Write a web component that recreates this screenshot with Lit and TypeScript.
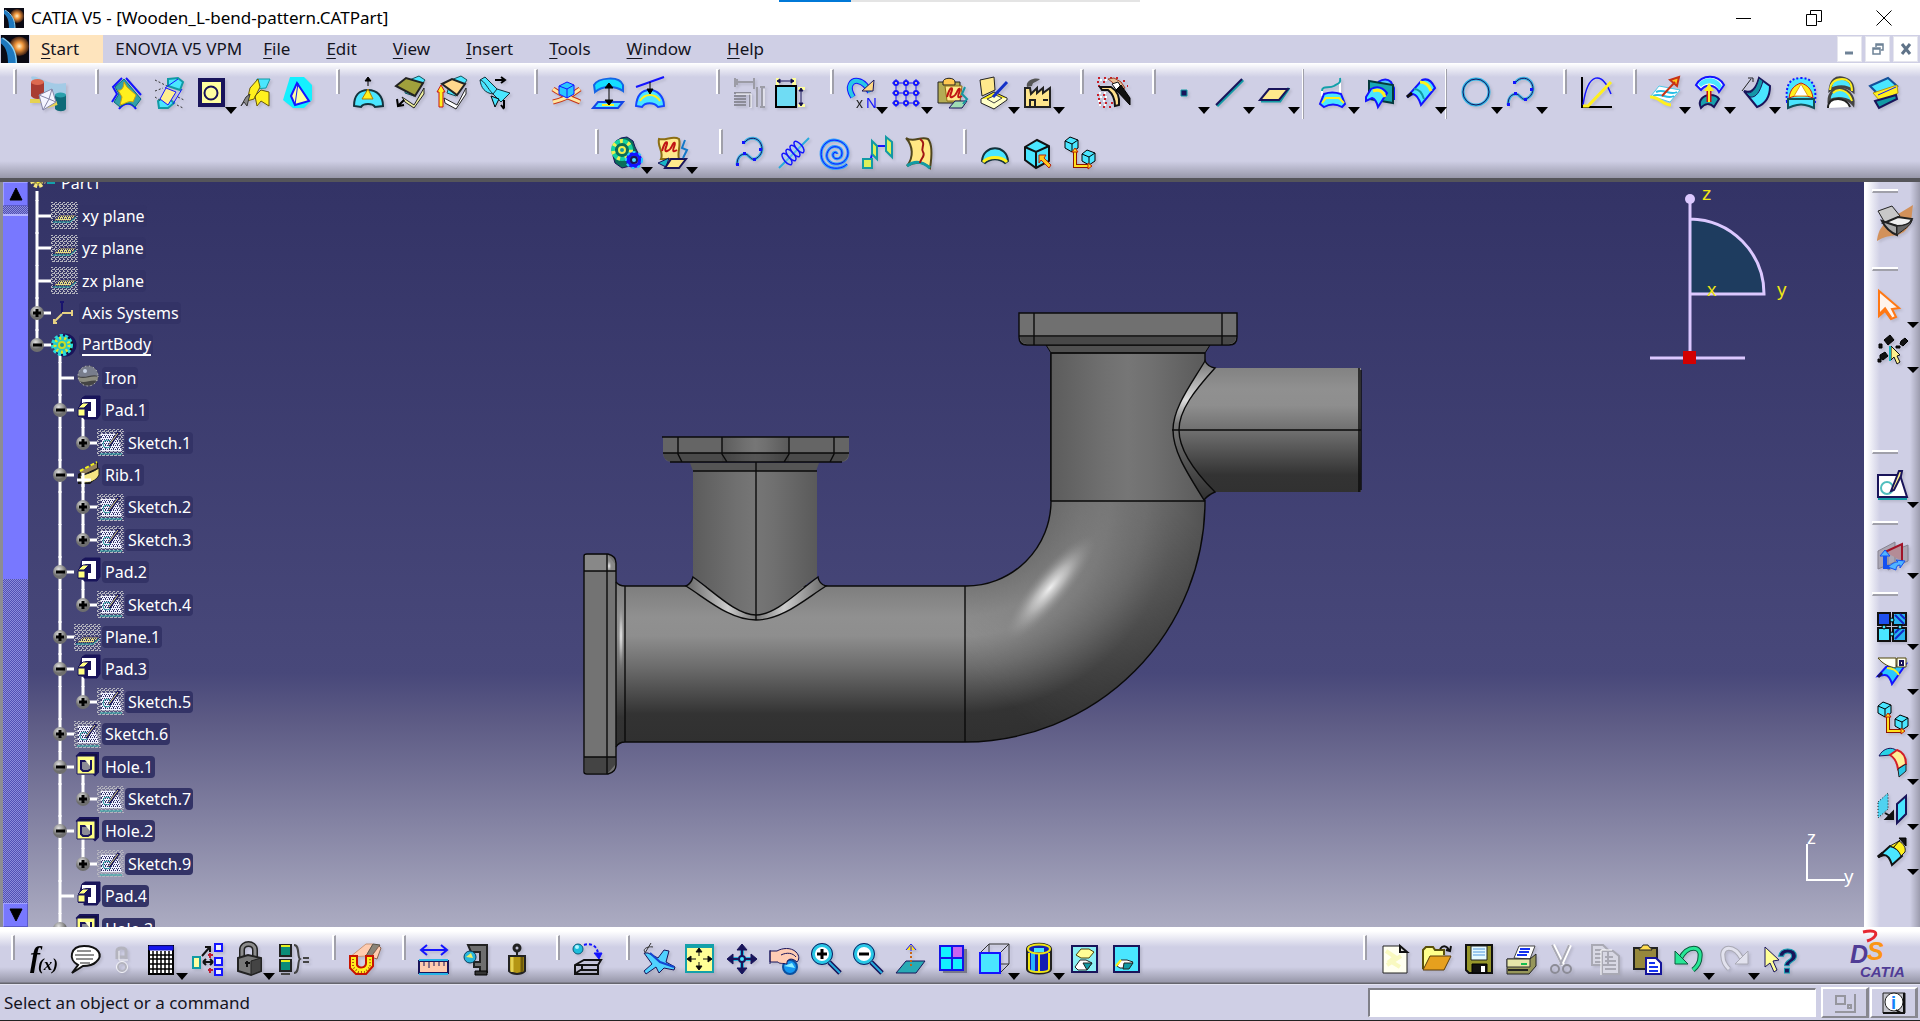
import { LitElement, html, css, svg, nothing } from "lit";
import { customElement } from "lit/decorators.js";

const CY = "#4ae6ff";
const BL = "#1414ff";
const NV = "#19145a";
const YE = "#fff01e";
const TN = "#ffe98c";
const TE = "#129aa4";
const GR = "#a9a9b4";

const p = (d: string, fill = "none", stroke = "#000", w = 1) =>
  svg`<path d=${d} fill=${fill} stroke=${stroke} stroke-width=${w} />`;
const c = (x: number, y: number, r: number, fill = "none", stroke = "#000", w = 1) =>
  svg`<circle cx=${x} cy=${y} r=${r} fill=${fill} stroke=${stroke} stroke-width=${w} />`;
const ICUBE = (x: number, y: number, f = CY) =>
  svg`${p(`M${x} ${y + 4}l5-4 8 3v8l-6 4-7-4z`, f)}${p(`M${x} ${y + 4}l7 3 6-4M${x + 7} ${y + 7}v8`)}`;
const LINKS = svg`${ICUBE(1, 0)}${ICUBE(18, 13)}${p("M11 14v15h14", "none", "#8c1400", 4)}${p("M11 13v16h14", "none", "#ffe01e", 2)}${p("M8 15l3-4 3 4zM24 26l4 3-4 3z", "#ffe01e", "#c02000")}`;
const CURVE = svg`${p("M8 6C13-1 22 0 25 7s-1 13-6 15-6-6-11-5-7 5-7 11", "none", "#3cb4e6", 3)}${p("M8 6C13-1 22 0 25 7s-1 13-6 15-6-6-11-5-7 5-7 11", "none", NV, 1)}${p("M6 4h3v3H6zM23 11h3v3h-3zM17 21h3v3h-3zM7 15h3v3H7zM0 26h3v3H0z", BL, BL, 0)}`;
const SQUIG = p("M5 14C8 3 12 3 9 10s4 4 6-1 4-4 2 1 0 5 3 3", "none", "#c01414", 2);

const ICONS: Record<string, unknown> = {
  mail: svg`${p("M1 0c8-3 15 10 35 6v18H10z", "#a4cbe6", "none")}${p("M1 5v14c3 4 10 4 13 0V5z", "#a83c32", "none")}<ellipse cx="7.500" cy="5" rx="6.500" ry="3" fill="#dd6a50" />${p("M25 18v14c3 3 9 3 11 0V18z", "#0e6a78", "none")}<ellipse cx="30.500" cy="18" rx="5.500" ry="2.500" fill="#2aa0ac" />${p("M0 24h12l5 5 10-3", "none", "#e6d250", 4)}${p("M9 18l13-6 4 13-13 8z", "#f4f4ff", "#8686a8")}${p("M9 18l10 4 3-10M13 33l6-11 7 3", "none", "#8686a8")}`,
  join: svg`${p("M10 1L1 10l4 7-5 8M14 1l15 17M7 32c5-7 13-7 17 0", "none", BL, 2)}${p("M12 2L3 10l4 7-5 8 6 5c5-5 11-5 15 0l6-8z", "#32a0aa", "#0a6e78")}${p("M12 5l3 5 9 8-3 7c-4-2-8 2-13 3l2-8-4-7c4 1 6-3 6-8z", YE, "#c8a014")}`,
  heal: svg`${p("M14 2l10-1 5 4-3 8-12-4z", CY, TE, 2)}${p("M4 24l8-5 8 7-6 5H5z", CY, TE, 2)}${p("M12 11l10 4-8 13-8-6z", "#ffee90", BL)}<path d="M1 3l12 6M1 14l8-3M24 20l6 3M23 28l6 3M1 20l6 4" fill="none" stroke="#333" stroke-dasharray="2 2" />${p("M11 11L24 2M19 27l9-15", "none", BL)}`,
  untrim: svg`${p("M4 3h23v25H4z", "#ffffa0", NV, 4)}${c(15, 16, 6.5, "none", NV, 2)}`,
  disassemble: svg`${p("M16 2h13l-4 9-12 1z", CY, TE)}${p("M9 11l8-9 2 8-6 12-7 2zM14 19l6-6 8 2v14l-8-5-4 5z", YE, "#69570a")}${p("M0 29l5-9 4-3-3 12-3-4z", "#888", "#333")}`,
  split: svg`${p("M7 0h14l8 8v15l-8 8H10L0 23z", "#14f0ff", "none")}${p("M14 6l12 18-14 4-4-9z", "#ffffa0", BL, 2)}${p("M15 6l-3 22", "none", BL, 1)}`,
  extrude1: svg`${p("M15 9V2M12 4l3-4 3 4z", "#000")}${p("M1 29c0-10 5-16 14-16s15 6 15 16l-8 1c-2-4-12-4-14 0z", CY, "#14323c", 2)}${p("M15 12l5 10H9z", YE, "#b07c00")}`,
  offset1: svg`${p("M12 4l12-5 6 4-11 16-9-3z", CY, "#14505a")}${p("M1 9l10-8 17 5-8 13z", "#a0a03c", "#222", 2)}${p("M7 20l12 8 10-17v6L19 31l-9-6z", "#f0f0a0", "#222")}${p("M3 29l6-6M2 22l1 7 6-1", "none", "#000", 2)}`,
  offset2: svg`${p("M14 3l10-4 6 4-11 16-9-3z", CY, "#14505a")}${p("M5 7l10-5 13 5-8 11z", "#ffd88c", "#222", 2)}${p("M7 21l13 7 9-17v6L19 32l-11-6z", "#fff", "#222")}${p("M2 30V15H0l4-7 4 7H6v15z", YE, "#c81414")}`,
  rotate: svg`${p("M1 3l5-3 12 12 13 4-9 9-8-8C6 16 2 11 1 3z", CY, "#14323c")}${p("M1 3c5 1 7 8 13 14M18 12l-4 5", "none", "#14323c")}${p("M16 3h9M22 0l4 3-4 3M25 23v8M22 28l3 4", "none", "#000", 2)}${p("M12 19l4 11 4-8z", CY)}`,
  csys: svg`${p("M2 25c9-2 18-6 27-13M29 25C20 21 10 18 2 12", "none", "#c83214", 5)}${p("M2 25c9-2 18-6 27-13M29 25C20 21 10 18 2 12", "none", "#ffe6a0", 3)}${p("M8 9l8-4 7 3v9l-7 4-8-4z", "#28c8ff", BL)}${p("M8 9l8 3 7-4M16 12v9", "none", BL)}`,
  thick: svg`${p("M1 8C5 1 26-2 30 8v6c-7-5-20-6-28 1z", "#14dcff", "#1464e6", 2)}${p("M5 25h25l-5 6H0z", CY, "#1446e6", 2)}${p("M9 28h12", "none", YE, 2)}${p("M16 8v18M12 11l4-5 4 5zM12 23l4 5 4-5z", "#000", "#000", 1)}`,
  draft: svg`${p("M1 10L29 0", "none", BL, 2)}${p("M1 29c1-12 7-16 14-16s14 6 14 16l-6 1c-4-5-13-5-16 0z", CY, "#1446ff", 2)}${p("M5 24c5-8 15-8 20 0", "none", YE, 2)}${p("M15 5v10M12 12l3 5 3-5z", "#000")}`,
  dimOff: svg`${p("M2 1v9M21 1v11M2 5h18M4 2v6M27 10h5M27 30h5M29 11v19M24 10v20", "none", "#9c9ca6", 2)}${p("M1 16h16v14M1 19h12M1 22h12M1 25h12M1 28h12", "none", "#8c8c98", 2)}${p("M3 17h15v14M31 12v17", "none", "#fff", 1)}`,
  dim: svg`${p("M1 1h3v8H1zM17 1h4v8h-4zM23 10h7v3h-7zM23 27h7v3h-7z", "#ffff9c", "none")}${p("M1 9h20v21H1z", "#6fdcf4", "#000", 2)}${p("M2 4h17M2 4l3-2v4zM19 4l-3-2v4zM26 12v16M26 11l-2 3h4zM26 29l-2-3h4z", "#000", NV, 1)}`,
  repeat: svg`${p("M6 20C-1 9 5 3 11 4s9 6 12 11", "none", BL, 6)}${p("M6 20C-1 9 5 3 11 4s9 6 12 11", "none", "#28c8e6", 4)}${p("M15 14h11l1-11z", "#ffd884", NV)}<text x="9" y="31" font-size="14" fill="#222">x</text><text x="19" y="31" font-size="15" fill="#1414ff">N</text>`,
  pattern: svg`${p("M4 2v28M14 2v28M24 2v28M0 6h28M0 16h28M0 26h28", "none", BL, 1)}${[4, 14, 24].map((x) => [6, 16, 26].map((y) => c(x, y, 2, "#ffff9c", BL, 2)))}`,
  paste1: svg`${p("M1 5h22v21H1z", "#b4ac54", "#222", 1)}${p("M6 5c0-5 12-5 12 0v3H6z", "#ffc850", "#222")}${p("M8 9h17l-2 15H10z", "#ffe98c", "#8c6e14")}<g transform="translate(5 6)">${SQUIG}</g>${p("M12 31l6-7h12l-5 7z", "#a0dcb4", NV)}${p("M28 10l-3 7 5 5-4 5", "none", "#1496a0", 2)}`,
  catalog: svg`${p("M1 3L15 0l1 13-13 6z", TN, "#222", 1)}${p("M2 22l13-7 13 6-13 10z", YE, "#222", 1)}${p("M2 22v4l13 6 13-9v-2", "#ffffc8", "#222")}${p("M8 22l9-4 6 3-8 5z", "#ffffc8", "#444")}${p("M14 20l14-15", "none", "#1432c8", 3)}`,
  factory: svg`${p("M1 30V11h5l1 6 6-6v5l6-5v5l7-5v19z", "#ffe68c", "#222", 2)}${p("M6 30v-7h5v7M19 23h5", "none", "#222", 2)}${p("M3 10c-2-7 8-10 13-8-4 4-7 2-8 7z", "#555", "none")}`,
  wizard: svg`<path d="M1 1h20M0 5h9M1 9h5M0 18h12M1 22h12M2 26h14M20 4h9M24 9h7M6 30h10" fill="none" stroke="#c81e28" stroke-width="2" stroke-dasharray="2 4" /><path d="M3 3h8M2 16h10M3 20h8M1 24h10M2 28h8" fill="none" stroke="#fff" stroke-width="2" stroke-dasharray="2 3" />${p("M11 2l6-1 7 4 4 6-4 2-9-8z", "#e6be96", "#a03c28", 1)}${p("M3 10h11c5 3 9 9 8 18l-4 1c0-8-2-12-7-16H5z", "#ffe08c", "#111", 2)}${p("M15 7l6-2 3 5-4 4z", "#fff", "#111")}${p("M19 13l5-5 9 13v7z", "#111", "#000")}`,
  point: p("M12 13h6v6h-6z", NV, TE, 1),
  line: svg`${p("M3 29L29 3", "none", TE, 3)}${p("M2 28L28 2", "none", NV, 2)}`,
  plane: svg`${p("M2 24h19l9-13", "none", TE, 3)}${p("M10 12h19l-9 11H1z", TN, NV, 2)}`,
  project: svg`${p("M3 13v6M21 1v17", "none", "#fff", 2)}${p("M3 14c0-6 7-2 12-5s7-3 6-8", "none", "#14a0aa", 2)}${p("M5 17q8-3 17 0l4 10-3 3q-9-5-18 0l-4-3z", CY, BL, 2)}${p("M3 26l4-5h13l5 5", "none", YE, 2)}`,
  intersect: svg`${p("M14 5q8-5 13 0l3 6v12", "#50c8ff", BL, 2)}${p("M5 4l24 4v18l-24-4z", "#18a8b4", "#04383c", 2)}${p("M2 20l5-8q9-5 16 4l-9 14q-2-8-6-9l-6 3z", CY, BL, 2)}${p("M9 14q9-3 12 6", "none", YE, 3)}`,
  parallel: svg`${p("M1 20L16 3q8-3 13 8L15 28q-3-10-8-11z", CY, BL, 2)}${p("M1 20l5-4", "none", "#111", 3)}${p("M14 5q8 0 11 9", "none", YE, 3)}${p("M8 12q7 0 10 10", "none", TE, 2)}`,
  circle: svg`${c(14, 15, 13, "none", "#28b4e6", 3)}${c(14, 15, 13, "none", NV, 1)}`,
  spline: CURVE,
  law: svg`${p("M2 0v30h30", "none", "#000", 2)}${p("M3 28C8-6 22-6 31 17", "none", BL, 1.5)}${p("M3 29h5L31 5", "none", YE, 3)}`,
  extrude: svg`${p("M1 19L9 9l21 4-10 12z", "#fff", "#50c8e6")}${p("M3 19c8-4 14 4 21 0M6 15c8-4 14 4 21 0", "none", "#28bee6", 2)}${p("M0 20c8-1 13 8 21 8", "none", YE, 3)}${p("M12 19L25 5M20 3l9-3-2 9z", "#ffc81e", "#c83214", 2)}`,
  revolve: svg`${p("M1 8C7-3 23-3 29 8l-5 7C20 7 10 7 6 13z", "#fff", BL, 2)}${p("M3 7C9-1 22-1 27 9l-3 4C20 5 11 5 6 10z", CY, "none")}${p("M6 31c-4-8 3-13 9-13 5 0 8 2 9 4l-5 8c-4-4-9-4-13 1z", "#18a0ac", NV, 2)}${p("M14 25V11", "none", "#c81414", 5)}${p("M14 25V11M11 13l3-5 3 5z", YE, YE, 2)}`,
  sweep: svg`${p("M4 14c7 3 12-2 15-13l11 8c0 12-5 18-13 21z", CY, NV, 2)}${p("M5 15c6 3 11-2 14-14l4 3C20 15 16 21 10 20z", "#1496a8", NV)}${p("M2 14l9-12M8 1h5v4", "none", "#222")}`,
  fill: svg`<path d="M2 25C0 6 6 1 16 1s16 6 14 24z" fill="#4ae6ff" stroke="#1414ff" stroke-width="2" stroke-dasharray="2 2" />${p("M4 21c1-9 6-13 12-15 6 2 11 6 12 15-7-3-17-3-24 0z", YE, "#c81414", 1)}${p("M9 19l7-12 7 12z", "#fff", "#e6a014")}${p("M3 22h26v9l-5-2c-5-2-11-2-16 0l-5 2z", CY, "#14505a", 2)}`,
  multisec: svg`${p("M3 13C4 3 9 0 15 1s11 4 11 13c-7-6-17-5-23-1z", CY, "#444", 3)}${p("M3 13C4 4 9 2 15 2s10 4 10 12", "none", YE, 2)}${p("M2 24c0-9 6-13 12-12s13 6 12 15c-5-6-17-7-24-3z", CY, "#444", 3)}${p("M6 16c5-5 15-4 19 8", "none", YE, 2)}${p("M1 31c0-8 6-9 10-9s10 2 12 8", "#fff", "#222", 2)}`,
  blend: svg`${p("M1 9L19 1l9 8-19 8z", CY, "#14509a", 2)}${p("M4 16l24-8 1 8-18 8z", YE, "#b49614")}${p("M9 18l18-8", "none", BL)}${p("M6 24l21-6 1 4-18 9z", TE, NV, 2)}`,

  gears: svg`${p("M4 4l5-3 6-1 6 4 2 6 3 6-2 8-6 5-8 2-7-5-2-7 2-7z", "#0a6e5a", NV, 1)}${c(10, 13, 9, "none", "#14d2a0", 4)}<circle cx="10" cy="13" r="9" fill="none" stroke="#f0f050" stroke-width="4" stroke-dasharray="3 5" />${c(10, 13, 3, TE, "#f0f050", 2)}${c(22, 23, 6, "none", BL, 4)}${c(22, 23, 3, CY, NV, 2)}<circle cx="22" cy="23" r="8" fill="none" stroke="#28c8ff" stroke-width="2" stroke-dasharray="3 3" />`,
  feature: svg`${p("M2 2c7 2 14-4 20 0 2 7-2 13 0 20H4C7 15 0 9 2 2z", TN, "#8c6e14", 2)}${SQUIG}${p("M1 26l11-5-3 9z", "#18b4c8", NV)}${p("M8 31l6-9h15l-7 9z", TN, NV, 2)}${p("M28 3l-3 8 5 2-4 8", "none", "#1478c8", 2)}`,
  helix: svg`${p("M1 31L31 1", "none", "#28aadc", 2)}${[0, 1, 2, 3].map((i) => svg`<ellipse cx=${9 + i * 4} cy=${22 - i * 4} rx="3" ry="7" transform=${`rotate(-40 ${9 + i * 4} ${22 - i * 4})`} fill="#a0dcff" fill-opacity=".4" stroke=${BL} stroke-width="1.5" />`)}`,
  spiral: svg`${p("M17 17c0-3-5-2-4 2s9 4 9-3-10-9-14-2 2 14 10 13 12-9 9-16S13 0 6 6 0 23 6 28s17 4 21-1", "none", "#28a0ff", 3)}${p("M17 17c0-3-5-2-4 2s9 4 9-3-10-9-14-2 2 14 10 13 12-9 9-16S13 0 6 6 0 23 6 28s17 4 21-1", "none", BL, 1)}`,
  spine: svg`${p("M6 25C14 18 6 11 15 9h15", "none", BL, 2)}${p("M1 22h9v9H1zM10 4l5 5v13l-5-5zM24 0l6 5v15l-6-6z", "#dcf05a", TE, 2)}`,
  boundary: svg`${p("M2 1c8 5 14-2 22 1 5 6 4 17 2 29-6-6-14-7-23-2 7-9 6-20-1-28z", "#ffe884", "#50461e", 2)}${p("M3 29c8-6 16-4 23 2", "none", TE, 3)}${p("M16 2c7 5 0 9 3 13s-3 7-3 11", "none", "#a01414", 2)}`,
  dome: svg`${p("M2 24C3 7 27 7 28 24l-3 2c-6-5-14-5-20 0z", CY, "#14323c", 2)}${p("M3 25c6-6 18-6 24 0", "none", YE, 3)}`,
  cube: svg`${p("M3 10L15 3l12 6v15l-13 7-11-8z", CY, "#111", 2)}${p("M3 10l11 5 13-6M14 15v16", "none", "#111", 2)}${p("M17 18h7l-2 3 7 7-2 3-8-8-2 3z", "#ffc81e", "#b42814")}`,
  links: LINKS,

  fx: svg`<text class="it" x="2" y="24" font-size="30" font-weight="700">f</text><text class="it" x="10" y="27" font-size="17" font-weight="700">(x)</text>`,
  comment: svg`${p("M2 30l6-8C-2 17 0 3 14 3s20 9 12 16c-3 3-8 4-13 4z", "#fff", "#111", 2)}${p("M7 8h14M5 12h19M6 16h17M10 20h10", "none", "#222", 1)}`,
  chain: svg`${p("M5 16V8c0-4 9-4 9 0v8M5 14h9", "none", "#b4b4be", 3)}${c(10, 24, 4, "none", "#b4b4be", 2)}${c(10, 24, 5.5, "none", "#f4f4f8", 1)}${p("M7 8v9h9", "none", "#f4f4f8")}`,
  table: svg`${p("M2 3h24v28H2z", "#fff", "#000", 2)}${p("M2 3h24v4H2z", "#1414f0", "#1414c8")}${p("M6 8v23M10 8v23M14 8v23M18 8v23M22 8v23M2 12h24M2 16h24M2 21h24M2 26h24", "none", "#000", 1.5)}`,
  relations: svg`${p("M1 14h7v11H1z", "#ffffa0", TE, 2)}${p("M23 1h7v7h-7zM23 15h7v7h-7zM23 26h7v6h-7z", "#eef", BL, 2)}${p("M11 19h10M11 19l3-3M11 19l3 3M21 19l-3-3M21 19l-3 3M10 13l7-8M13 4h5v5", "none", "#111", 2)}${p("M16 12h5M18 10v5M16 27h5M18 25v5", "none", "#c01e32", 2)}`,
  lock: svg`${p("M8 15V7c0-8 13-8 13 0v9", "none", "#222", 6)}${p("M8 15V7c0-8 13-8 13 0v9", "none", "#8c8c8c", 3)}${p("M4 15l10-3 13 3v13l-10 4-13-4z", "#787878", "#222", 2)}${p("M17 18v14l10-4V15z", "#444", "#222")}${p("M11 20h5M13 18v6", "none", "#111", 2)}`,
  params: svg`${p("M1 2h11v11H1zM1 17h11v11H1z", "#0a8c78", "#222", 2)}${p("M2 3h9M2 18h9", "none", "#e6f01e", 2)}${p("M15 2c6 0 3 12 6 14-3 2 0 14-6 14", "none", "#444", 2)}${p("M24 15h6M24 19h6M2 31h9", "none", "#444", 2)}`,
  pipe: svg`${p("M1 14L17 1h7l-7 12z", "#ffccb0", "#c89678")}${p("M17 13l4 2L31 2l-7-1z", "#8a8478", "#5a5448")}${p("M22 14l8-11 2 2-4 11z", "#ffccb0", "#8c6450")}${p("M1 13h7v9c2 4 9 3 9-2v-7h7v10l-7 8H7l-6-6z", YE, "#c81400", 2)}<path d="M4 16v8l5 5h7l5-5v-8" fill="none" stroke="#b45014" stroke-width="2" stroke-dasharray="1 2" />`,
  measure: svg`${p("M2 7h26M8 2L2 7l6 5M22 2l6 5-6 5", "none", BL, 2)}${p("M0 18h29v12H0z", "#ffccb0", NV, 2)}${p("M5 18v5M10 18v7M15 18v5M20 18v5M25 18v5", "none", NV, 1)}${p("M0 17h29M0 31h29", "none", "#28b4e6", 2)}`,
  clamp: svg`${p("M7 2h19v27h-7v-5h-6v-5h6V9h-9z", "#6e6e6e", "#222", 2)}${c(9, 14, 6, "#28b4dc", "#0a3c5a", 1)}${p("M5 14l5-4 2 5z", "#f0f064", "none")}${p("M14 28h12v4H14z", "#333")}`,
  weight: svg`${c(14, 5, 3, "none", "#222", 3)}${p("M14 8v4M6 13h16v15c-4 4-12 4-16 0z", "#b49614", "#222", 2)}${p("M9 14v15", "none", "#e6d250", 3)}${p("M19 14v15", "none", "#6e5a0a", 3)}`,
  update: svg`${c(5, 6, 5, "#1cbedc", "#0a5a78")}${c(4, 4, 2, "#b4f5ff", "none")}<path d="M11 2c6-2 14 0 14 10" fill="none" stroke="#1414ff" stroke-width="2" stroke-dasharray="3 2" />${p("M21 10h8l-3 6z", BL, BL)}${p("M2 22l9-5h17l-3 5v9H2zM2 22h23M9 22v5h16M9 26l-6 4", "none", "#111", 2)}`,
  fly: svg`${p("M1 28l8-7L1 10h4l10 5 6-8 5 1-3 11 9 5-1 3-10-2-5 5-3-6-10 7z", "#50d2ff", NV, 1)}${p("M7 10l10 9 14 5", "none", "#1446d2", 2)}${p("M2 9C-1 6 5 3 10 4M8 0l-6 10", "none", "#333", 1)}`,
  fit: svg`${p("M1 2h27v27H1z", "#ffff96", "#14a0aa", 2)}${p("M0 3h29", "none", "#14a0aa", 4)}${p("M14 13V6M14 19v7M4 16h7M18 16h7M11 9l3-4 3 4zM11 23l3 4 3-4zM6 13l-4 3 4 3zM23 13l4 3-4 3z", "#000", "#111", 1)}`,
  pan: svg`${p("M15 3v27M2 16h26", "none", "#28b4dc", 4)}${p("M15 3v27M2 16h26", "none", NV, 2)}${p("M10 7l5-6 5 6zM10 25l5 6 5-6zM6 11l-6 5 6 5zM24 11l6 5-6 5z", NV, NV)}${c(15, 16, 3, CY, NV, 2)}`,
  orbit: svg`${c(21, 24, 7, "#1496f0", "#0a50a0", 2)}${p("M15 23l8-3 3 5z", "#8cf0ff", "none")}${p("M1 8h7c5-3 14-4 19 1 4 4 3 8 1 10-5-5-11-3-10 2-4-1-8 0-9-2H1z", "#ffccb4", NV, 1)}${p("M12 12c6-3 12-2 15 2M1 7v14", "none", NV, 1)}`,
  zoomIn: svg`${p("M18 19l11 11", "none", NV, 5)}${p("M17 18l12 12", "none", "#28aadc", 2)}${c(11, 11, 9, "#fff", "#28c8e6", 4)}${c(11, 11, 10.5, "none", NV, 1)}${p("M6 11h10M11 6v10", "none", "#000", 3)}`,
  zoomOut: svg`${p("M18 19l11 11", "none", NV, 5)}${p("M17 18l12 12", "none", "#28aadc", 2)}${c(11, 11, 9, "#fff", "#28c8e6", 4)}${c(11, 11, 10.5, "none", NV, 1)}${p("M6 11h10", "none", "#000", 3)}`,
  normal: svg`${p("M1 30l10-12h19L21 30z", "#28aab4", NV, 1)}<path d="M16 23V5" fill="none" stroke="#c86414" stroke-width="2" stroke-dasharray="2 2" />${p("M11 7l5-6 5 6M16 3v5", "#ffe01e", BL, 1)}`,
  views: svg`${p("M6 6h24v24H6z", "#78788a", "none")}${p("M3 3h23v24H3z", "#14f0ff", "#1414e6", 2)}${p("M15 4h10v10H15z", "#c864f0", "none")}${p("M15 3v24M3 15h23", "none", "#1414e6", 2)}`,
  box: svg`${p("M1 10L10 1h20v20l-9 9M21 10l9-9M10 1v9M21 21h9", "none", "#333", 1)}${p("M1 10h20v20H1z", CY, BL, 2)}`,
  cylinder: svg`${p("M3 6c0-7 24-7 24 0v20c0 6-24 6-24 0z", "#141eb4", "#222", 2)}${p("M7 10h4v18H7z", "#28b4ff", "none")}${p("M4 6c0-6 22-6 22 0s-22 6-22 0zM5 10v16c0 4 20 4 20 0V10M15 10v18", "none", "#f0e614", 2)}${p("M10 5h10v4H10z", CY, "none")}`,
  hide: svg`${p("M3 3h25v26H3z", "#8cf0f5", NV, 2)}${p("M7 12l5-6h8l5 3-5 6h-8z", "#ffff96", "#50460a")}${p("M6 24l5-7h6l6 3-5 7h-9z", "#fff", "#222")}${p("M14 20l9 0-5 7z", TE, "#222")}`,
  swap: svg`${p("M3 3h25v26H3z", CY, NV, 2)}${p("M6 23l4-6h6l6 2-4 6h-9z", "#fff", "#222")}${p("M13 20h9l-4 6h-6z", TE, "#222")}${p("M5 23l5-6", "none", YE, 2)}`,
  newDoc: svg`${p("M3 3h17l7 6v21H3z", "#fffff0", "#222", 1)}${p("M20 3v6h7z", "#ddd", "#111", 2)}${p("M6 8l9 6-5 4 10 6M7 22l14-9", "none", "#f9f9c0", 4)}`,
  open: svg`${p("M1 26V7l3-3h7l2 3h9v5", "#ffff8c", "#5a500a", 2)}${p("M1 27l7-14h21l-7 14z", "#e6a01e", "#5a3c0a", 1)}${p("M18 6c4-5 8-2 9 2M24 7l4 1 1-5", "none", "#111", 2)}`,
  save: svg`${p("M2 2h26v28H5l-3-3z", "#96962a", "#111", 2)}${p("M7 3h16v14H7z", "#e6faff", "#222", 1)}${p("M9 6h12M9 9h12M9 12h12", "none", "#5096dc")}${p("M8 21h15v9H8z", "#111")}${p("M17 23h4v6h-4z", "#fff", "none")}`,
  print: svg`${p("M8 15l5-12h16l-5 13z", "#fff", "#444")}${p("M14 6h10M13 9h10M11 12h10", "none", "#1432f0", 2)}${p("M1 16h23l6-5v12l-7 8H1z", "#96965a", "#222", 1)}${p("M1 16h23v8H1z", "#e6e6aa", "#333")}${p("M15 21h6", "none", "#14be50", 2)}${p("M2 27h20", "none", "#222", 2)}`,
  cut: svg`${p("M5 2l10 20M22 2L13 22", "none", "#fff", 4)}${p("M4 2l10 20M21 2L12 22", "none", GR, 2)}${c(7, 26, 4, "none", "#8c8c96", 2)}${c(19, 26, 4, "none", "#8c8c96", 2)}`,
  copy: svg`${p("M2 2h11l5 5v15H2zM12 8h11l6 5v18H12z", "#d8d8e4", GR, 2)}${p("M5 7h7M5 11h6M5 15h6M5 19h6M15 14h8M15 18h11M15 22h11M15 26h11", "none", GR, 2)}${p("M11 32V7h11", "none", "#fff")}`,
  paste: svg`${p("M2 5h23v21H2z", "#96883c", "#222", 2)}${p("M7 7c0-2 3-2 4-5h5c1 3 4 3 4 5z", "#ffdc50", "#222")}${p("M14 15h10l5 5v11H14z", "#fff", "#14149a", 2)}${p("M17 20h6M17 24h9M17 28h9", "none", "#1432f0", 2)}`,
  undo: svg`${p("M6 16C14 1 28 3 26 14c0 5-2 9-7 13", "none", "#0a5a3c", 5)}${p("M6 16C14 1 28 3 26 14c0 5-2 9-7 13", "none", "#28e696", 3)}${p("M1 8v13h13z", "#28e696", "#0a5a3c", 1)}`,
  redo: svg`${p("M23 16C15 1 2 3 4 14c0 5 2 8 6 12", "none", GR, 5)}${p("M23 16C15 1 2 3 4 14c0 5 2 8 6 12", "none", "#e2e2ee", 3)}${p("M29 8v13H16z", "#e2e2ee", GR, 1)}`,
  help: svg`${p("M1 4l14 13-6 1 4 9-3 2-4-9-5 4z", "#ffff96", NV, 1)}<text x="13" y="30" font-size="35" font-weight="700" fill="#19145a" stroke="#18a0b4" stroke-width="1">?</text>`,

  workbench: svg`${p("M0 34c2-12 5-12 8-18L36-1c-2 12 0 18-8 26-8 7-15 2-28 10z", "#d2915a", "none")}${p("M1 5l14-5 8 10-15 7z", "#c8c8c8", "#222")}${p("M7 17l14-6 14 2c-2 6-9 7-15 7z", "#f0f0f0", "#222", 2)}${p("M5 15l15 5v9C12 26 8 21 5 15z", "#aaa", "#222", 2)}${p("M20 20c6 0 13-2 15-6-1 6-8 9-15 15z", "#666", "#222")}`,
  select: svg`${p("M2 1v25l6-5 6 8 5-2-4-8 7-1z", "#fff4ec", "#ff7814", 2)}${p("M3 24l5-5 6 9", "none", "#ff7814", 3)}`,
  selectSet: svg`${p("M7 5l6-5 4 5-6 5zM24 6l4-3 3 3-5 5-3-2zM3 20l5-3 3 4-5 4-3-2zM2 9h3v4H2zM1 24h3v3H1zM19 11h4v2h-4z", "#111")}${p("M14 11l9 9-3 1 3 6-3 2-3-7-3 3z", "#fff08c", "#111", 1)}${p("M13 11v15", "none", "#14b4be", 2)}`,
  sketcher: svg`${p("M1 5h22l7 22H1z", "#fff", NV, 2)}${p("M1 29h29", "none", TE, 2)}${c(10, 18, 6, "none", "#50bebe", 2)}${p("M14 21l8-20h3l-1 5-7 14z", "#fff08c", NV, 2)}`,
  axis: svg`${p("M1 10l17-9v20L1 28zM11 12l20-8v16l-20 9z", "#aaa6b4", "#86828f", 1)}${p("M8 11l17-8v17", "#b48c96", "#a01428", 2)}${p("M8 14v12h5", "none", "#1450f0", 4)}${p("M3 15l5-6 5 6zM11 26c6-5 8-5 10-5l-2-2 9 1-5 7v-3c-3 0-4 2-4 5z", "#50b4ff", "#1450f0")}`,
  pieces: svg`${p("M1 1h12v12H1z", "#1e50f0", "#111", 2)}${p("M16 1h13v12H16z", "#28b4f0", "#111", 2)}${p("M1 16h12v13H1z", CY, "#111", 2)}${p("M16 16h13v13H16z", "#28b4f0", "#111", 2)}${p("M18 3l9 9M23 2l5 5M18 27l9-9M18 21l4-4", "none", "#1428c8", 2)}${c(15, 8, 2, CY)}${c(7, 15, 2, CY)}${c(15, 22, 2, CY)}${c(23, 15, 2, CY)}`,
  label: svg`${p("M1 19l8-9q3-1 9-1l11-2-14 20q-3-10-8-9z", "#28c8ff", BL, 2)}${p("M1 20l4-4", "none", NV, 3)}${p("M1 1h18v10C12 10 6 7 1 1zM20 1h9v9h-9z", "#fffff0", "#50460a", 1)}${p("M23 4h3v4h-3z", "none", NV, 2)}${p("M10 11q8 0 12 7", "none", YE, 2)}`,
  fillet: svg`${p("M2 9C6 1 15-1 20 4l-6 4z", "#28d2e6", NV, 1)}${p("M13 8l7-5c6 2 9 7 9 14l-8 5c-1-7-3-11-8-14z", "#fff096", "#d21e28", 2)}${p("M21 22l8-5v7l-7 6z", "#28c8e6", "#222", 1)}`,
  translate: svg`<path d="M1 10L11 1v16L1 26z" fill="#50d2f0" stroke="#111" stroke-dasharray="1 2" />${p("M20 12l9-8v18l-9 9z", "#4ae6ff", NV, 2)}${p("M8 21l7 4M16 20v7h-7z", "#111", "#111", 2)}`,
  extrapolate: svg`${p("M1 20l12-11q9 2 12 10l-10 9q-3-10-8-10z", CY, "#111", 2)}${p("M1 20l5-4", "none", "#111", 3)}${p("M13 9l9-5c5 3 7 7 6 11l-4 4q-3-8-11-10z", YE, "#222", 1)}${p("M16 11l7-8M22 1h7v8z", "#111")}`,

  tPlane: svg`<rect width="27" height="27" fill="url(#dots)" />${p("M2 19l7-6h17l-7 6z", "#e6dc82", NV, 1)}<path d="M2 19l7-6h17l-7 6z" fill="url(#fine)" />${p("M2 20h17l6-5", "none", "#28b4aa", 1)}`,
  tSketch: svg`<rect width="27" height="27" fill="url(#dots)" />${p("M4 5h16l5 17H4z", "#f0f0ff", "none")}<path d="M4 5h16l5 17H4z" fill="url(#fine)" />${c(10, 15, 4, "none", "#28969b", 1)}${p("M12 17L22 3", "none", NV, 3)}${p("M12 16L21 4", "none", "#e6dc82", 1)}${p("M3 25h22", "none", "#28b4aa", 1)}`,
  tAxis: svg`${p("M11 13V2M9 2h4", "none", "#19146e", 2)}${p("M11 13h11M21 10v6M11 14l-8 8M3 19v4h3", "none", "#e6d282", 2)}`,
  tGear: svg`${c(14, 13, 10, "#111", NV, 3)}<circle cx="11" cy="13" r="9" fill="#28c8c8" stroke="#28dcdc" stroke-width="4" stroke-dasharray="3 2" /><circle cx="11" cy="13" r="7" fill="none" stroke="#e6e61e" stroke-width="3" stroke-dasharray="2 3" />${c(11, 13, 3, "#149696", "#c8dc28", 2)}`,
  tIron: svg`${c(14, 12, 10, "#444", "#5a5a64", 1)}${p("M4 12C4-1 24-1 24 12c-6-3-12 3-20 0z", "#787d8c", "none")}${p("M4 13c7 3 13-2 20 0l-1 4c-6-2-12 3-18 0z", "#8c8c80", "none")}${c(11, 7, 2, "#c8d2e6", "none")}<circle cx="14" cy="12" r="10" fill="none" stroke="#d2d2d2" stroke-dasharray="1 3" />`,
  tPad: svg`${p("M8 1l3-2h15v19l-3 4H10V12H5z", NV, NV)}${p("M8 2h14v18H12v-5H8z", "#fff", "none")}${p("M12 5h5v9h-3v6H4v-7l4-6z", NV, "none")}${p("M4 11l5-5h6l-5 5zM4 12h7v7H4z", "#ffff82", NV, 1)}`,
  tRib: svg`${p("M4 12L24 0v14l-8 8H4z", "#111", "none")}${p("M6 14c7-2 13-4 19-8v7c-3 6-9 8-17 8z", "#f5e682", "#222")}${p("M6 9L23 1v5L8 13z", "#96825a", "none")}<path d="M6 9L23 0" fill="none" stroke="#f0f01e" stroke-width="2" stroke-dasharray="4 2" />${p("M3 18h14M9 11v14", "none", "#fff", 3)}`,
  tHole: svg`${p("M3 3l3-3h18v19l-3 3z", "#14123c", NV, 2)}${p("M3 3h18v18H3z", "#ffff82", NV, 1)}${p("M7 8h10v8l-3 2H9l-2-2z", "#8c8c96", NV, 2)}${p("M11 7h5v6z", "#ffffd2", "none")}`,
  tPart: svg`<circle cx="9" cy="10" r="6" fill="#8c8246" stroke="#f5e682" stroke-width="4" stroke-dasharray="3 2" />${p("M8 8l3 3-3 2", "none", "#fff03c", 2)}${p("M14 12l6-2", "none", NV, 2)}${p("M19 7h6v6h-6z", "#fff", "#14a0aa", 2)}`,
};

type Tool = [icon: string, label: string, menu?: 1];
interface Group { gap: string; lead?: string; tools: Tool[] }

const ROW1: Group[] = [
  { gap: "g13", tools: [["mail", "Send to"]] },
  { gap: "g23", tools: [["join", "Join"], ["heal", "Healing"], ["untrim", "Untrim", 1], ["disassemble", "Disassemble"], ["split", "Split"]] },
  { gap: "g11", tools: [["extrude1", "Thick surface"], ["offset1", "Offset"], ["offset2", "Variable offset"], ["rotate", "Rotate"]] },
  { gap: "g13", tools: [["csys", "Axis to axis"], ["thick", "Distance"], ["draft", "Project point"]] },
  { gap: "g39", tools: [["dimOff", "Dimension list"], ["dim", "Dimension"]] },
  { gap: "g13", tools: [["repeat", "Object repetition", 1], ["pattern", "Pattern", 1], ["paste1", "Paste feature"], ["catalog", "Catalog", 1], ["factory", "Instantiate", 1]] },
  { gap: "g11", tools: [["wizard", "Wizard"]] },
  { gap: "g13", tools: [["point", "Point", 1], ["line", "Line", 1], ["plane", "Plane", 1]] },
  { gap: "g0", lead: "rule", tools: [["project", "Projection", 1], ["intersect", "Intersection"], ["parallel", "Parallel curve", 1]] },
  { gap: "tight", lead: "rule", tools: [["circle", "Circle", 1], ["spline", "Spline", 1]] },
  { gap: "g11", tools: [["law", "Law"]] },
  { gap: "g11", tools: [["extrude", "Extrude", 1], ["revolve", "Revolve", 1], ["sweep", "Sweep", 1], ["fill", "Fill"], ["multisec", "Multi-sections surface"], ["blend", "Blend"]] },
];
const ROW2: Group[] = [
  { gap: "g0", tools: [["gears", "Bodies", 1], ["feature", "Power copy", 1]] },
  { gap: "g16", tools: [["spline", "Curve"], ["helix", "Helix"], ["spiral", "Spiral"], ["spine", "Spine"], ["boundary", "Boundary"]] },
  { gap: "g16", tools: [["dome", "Extract"], ["cube", "Face"], ["links", "Axis links"]] },
];
const BOTTOM: Group[] = [
  { gap: "g11", tools: [["fx", "Formula"], ["comment", "Comment"], ["chain", "Link"], ["table", "Design table", 1], ["relations", "Relations"], ["lock", "Lock", 1], ["params", "Equivalent dimensions"]] },
  { gap: "g11", tools: [["pipe", "Cutaway"]] },
  { gap: "g11", tools: [["measure", "Measure between"], ["clamp", "Measure item"], ["weight", "Measure inertia"]] },
  { gap: "g11", tools: [["update", "Update"]] },
  { gap: "g11", tools: [["fly", "Fly mode"], ["fit", "Fit all in"], ["pan", "Pan"], ["orbit", "Rotate view"], ["zoomIn", "Zoom in"], ["zoomOut", "Zoom out"], ["normal", "Normal view"], ["views", "Multi-view"], ["box", "Isometric view", 1], ["cylinder", "Shading", 1], ["hide", "Hide/Show"], ["swap", "Swap visible space"]] },
];
const STANDARD: Group[] = [
  { gap: "g0", tools: [["newDoc", "New"], ["open", "Open"], ["save", "Save"], ["print", "Print"], ["cut", "Cut"], ["copy", "Copy"], ["paste", "Paste"], ["undo", "Undo", 1], ["redo", "Redo", 1], ["help", "What's this?"]] },
];
const SIDE: Group[] = [
  { gap: "v8", tools: [["workbench", "Workbench"]] },
  { gap: "v18", tools: [["select", "Select", 1], ["selectSet", "Selection sets", 1]] },
  { gap: "v70", tools: [["sketcher", "Sketch", 1]] },
  { gap: "v6", tools: [["axis", "Axis system", 1]] },
  { gap: "v6", tools: [["pieces", "Join parts", 1], ["label", "Trim", 1], ["links", "Constraints", 1], ["fillet", "Fillet", 1], ["translate", "Translate", 1], ["extrapolate", "Extrapolate", 1]] },
];

type Row = [label: string, icon: string, level: number, knob?: "+" | "-"];
const TREE: Row[] = [
  ["Part1", "tPart", 0],
  ["xy plane", "tPlane", 0], ["yz plane", "tPlane", 0], ["zx plane", "tPlane", 0],
  ["Axis Systems", "tAxis", 0, "+"], ["PartBody", "tGear", 0, "-"],
  ["Iron", "tIron", 1], ["Pad.1", "tPad", 1, "-"], ["Sketch.1", "tSketch", 2, "+"],
  ["Rib.1", "tRib", 1, "-"], ["Sketch.2", "tSketch", 2, "+"], ["Sketch.3", "tSketch", 2, "+"],
  ["Pad.2", "tPad", 1, "-"], ["Sketch.4", "tSketch", 2, "+"], ["Plane.1", "tPlane", 1, "+"],
  ["Pad.3", "tPad", 1, "-"], ["Sketch.5", "tSketch", 2, "+"], ["Sketch.6", "tSketch", 1, "+"],
  ["Hole.1", "tHole", 1, "-"], ["Sketch.7", "tSketch", 2, "+"],
  ["Hole.2", "tHole", 1, "-"], ["Sketch.9", "tSketch", 2, "+"],
  ["Pad.4", "tPad", 1], ["Hole.3", "tHole", 1, "-"],
];
const MENUS = ["File", "Edit", "View", "Insert", "Tools", "Window", "Help"];

@customElement("app-root")
export class AppRoot extends LitElement {
  static styles = css`
    :host { display: flex; flex-direction: column; height: 100vh; overflow: hidden; background: #cfcfe5; color: #14141e; font: 17px/22px "Noto Sans", "Open Sans", sans-serif; }
    * { box-sizing: border-box; }
    button { border: 0; padding: 0; margin: 0; background: none; font: inherit; color: inherit; display: block; flex: none; }
    svg { display: block; flex: none; overflow: visible; }
    .defs { position: absolute; width: 0; height: 0; }

    .title { position: relative; display: flex; align-items: center; height: 35px; flex: none; background: #fff; color: #000; padding: 0 1px 0 4px; }
    .title h1 { flex: 1; margin: 0 0 0 7px; font: inherit; }
    .busy { position: absolute; top: 0; left: 50%; width: 361px; height: 2px; margin-left: -181px; background: linear-gradient(90deg, #0078d7 20%, #e4e4e4 20%); }
    .win { width: 70px; height: 30px; display: grid; place-items: center; }
    .win svg { margin: auto; }

    .menu { display: flex; align-items: center; height: 28px; flex: none; background: #cfcfe5; }
    .menu button { height: 28px; padding: 0 18px; }
    .menu .start { background: #fee4bd; padding: 0 24px 0 11px; margin-right: 12px; }
    .menu .pdm { padding: 0 3px 0 0; }
    .menu i { font-style: normal; text-decoration: underline; text-underline-offset: 3px; }
    .menu .logo { margin: 0 1px; }
    .mdi { display: flex; gap: 3px; margin-left: auto; padding-right: 2px; }
    .menu .mdi button { width: 25px; height: 26px; padding: 0; background: #fff; border: 1px solid #e6e6ee; }
    .mdi svg { margin: auto; }

    .bars { flex: none; height: 119px; padding-top: 6px; border-bottom: 4px solid #8c8c8c; border-image: linear-gradient(#555 25%, #8e8e8e 25%, #8e8e8e 75%, #55555a 75%) 4; background: linear-gradient(#fff, #cfcfe5 14px, #cfcfe5 98px, #9898aa 115px); }
    .bar { display: flex; height: 60px; align-items: flex-start; }
    .second { padding-left: 597px; }
    .group { display: flex; align-items: flex-start; }
    .grip { width: 4px; height: 25px; margin-right: 13px; border: solid #fff; border-width: 1px 0 0 2px; border-right: 2px solid #a0a0aa; flex: none; }
    .rule { width: 2px; height: 50px; margin-right: 15px; background: #fff; border-right: 1px solid #a0a0aa; flex: none; }
    .g13 { margin-left: 13px; } .g23 { margin-left: 23px; } .g11 { margin-left: 11px; }
    .g39 { margin-left: 39px; } .g16 { margin-left: 17px; } .g0 { margin-left: -2px; } .tight { margin-left: -6px; }
    .tool { position: relative; width: 42px; height: 40px; padding-top: 8px; }
    .tool.more { width: 45px; }
    .tool.chain { width: 35px; }
    .tool.more::after { content: ""; position: absolute; left: 29px; top: 38px; border: 6px solid transparent; border-top: 7px solid #000; border-bottom: 0; }
    .tool svg, .cell svg { filter: drop-shadow(2px 2px 1px #9c9cac66); }
    text { font-family: "Liberation Sans", sans-serif; }
    .it { font-family: "Liberation Serif", serif; font-style: italic; }

    .main { flex: 1; min-height: 0; display: flex; border-left: 3px solid #8c8c94; }
    .scroll { width: 25px; flex: none; display: flex; flex-direction: column; background: repeating-conic-gradient(#8c8cdc 0 25%, #5050b4 0 50%) 0 0 / 2px 2px; }
    .scroll button { height: 24px; background: #7878ff; border: 1px solid #5a5ac8; border-left-color: #a0a0ff; border-top-color: #a0a0ff; }
    .scroll button svg { margin: auto; }
    .thumb { margin-top: 8px; height: 49%; flex: none; background: #7878ff; border-top: 2px solid #b4b4ff; }
    .down { margin-top: auto; }
    .view { position: relative; flex: 1; min-width: 0; overflow: hidden; background: linear-gradient(#333366, #48487a 66%, #5c5a84 72%, #acacc2); }
    .model { position: absolute; inset: 0; width: 100%; height: 100%; }
    .compass { position: absolute; top: 0; right: 0; }
    .triad { position: absolute; bottom: 0; right: 0; }
    .tree { position: relative; list-style: none; margin: -15px 0 0; padding: 0; color: #fff; font-size: 16px; }
    .tree li { display: flex; align-items: center; height: 32px; }
    .tree li:nth-child(5n + 2), .tree li:nth-child(5n + 4) { height: 33px; }
    .label { background: #333366; border-radius: 4px; padding: 0 2px 0 3px; margin-left: 1px; line-height: 22px; }
    .part .label { background: none; margin-left: 2px; }
    .active .label span { border-bottom: 2px solid #fff; display: block; line-height: 20px; }
    .part .icon { margin-left: -22px; }

    .side { width: 56px; flex: none; padding: 7px 0 0 6px; border-left: 2px solid #fff; background: linear-gradient(90deg, #fff, #cfcfe5 14px, #cfcfe5 44px, #9c9cae 54px); }
    .hgrip { width: 26px; height: 4px; border: solid #fff; border-width: 2px 0 0 1px; border-bottom: 2px solid #a0a0aa; }
    .cell { position: relative; width: 46px; height: 45px; padding: 0 0 13px 5px; }
    .cell.more::after { content: ""; position: absolute; left: 35px; top: 32px; border: 6px solid transparent; border-top: 6px solid #000; border-bottom: 0; }
    .v8 .hgrip { margin-bottom: 13px; }
    .v18 .hgrip { margin: 16px 0 19px; }
    .v70 .hgrip { margin: 70px 0 16px; }
    .v6 .hgrip { margin: 6px 0 16px; }

    .foot { display: flex; flex: none; height: 58px; padding-top: 8px; background: linear-gradient(#fff 4px, #cfcfe5 20px, #cfcfe5 40px, #9898aa 55px, #66666e 56px, #66666e 57px, #e4e4f2 57px); }
    .std { display: flex; margin-left: auto; }
    .brand { width: 64px; margin: -8px 6px 0 44px; }
    .status { display: flex; flex: none; height: 36px; align-items: center; padding: 0 2px 0 4px; border-bottom: 1px solid #222; }
    .status p { margin: 0; flex: 1; }
    .cmd { width: 448px; height: 29px; border: solid #808088; border-width: 2px 1px 1px 2px; border-bottom-color: #fff; border-right-color: #fff; background: #fff; margin-right: 4px; font: inherit; }
    .status button { width: 48px; height: 31px; border: solid #fff; border-width: 2px 3px 2px 2px; border-right-color: #888890; border-bottom-color: #888890; margin-left: 1px; }
    .status button svg { margin: auto; }
  `;

  private icon(name: string, size = 32) {
    return html`<svg class="icon" width=${size} height=${size} viewBox="0 0 ${size} ${size}" aria-hidden="true">${ICONS[name]}</svg>`;
  }

  private groups(list: Group[]) {
    return list.map((g) => html`<div class="group ${g.gap}"><div class=${g.lead ?? "grip"}></div>${g.tools.map(
      ([icon, label, menu]) => html`<button class="tool ${icon} ${menu ? "more" : ""}" aria-label=${label}>${this.icon(icon)}</button>`)}</div>`);
  }

  private side() {
    return SIDE.map((g) => html`<div class=${g.gap}><div class="hgrip"></div>${g.tools.map(
      ([icon, label, menu]) => html`<button class="cell ${menu ? "more" : ""}" aria-label=${label}>${this.icon(icon)}</button>`)}</div>`);
  }

  private treeRow([label, icon, level, knob]: Row, i: number) {
    const x = 9 + 23 * level;
    const next = TREE[i + 1]?.[2] ?? 1;
    const last = i >= 5 && level === 0;
    const lines = [];
    if (i === 0) lines.push("M9 24v10");
    else {
      lines.push(`M${x} 0v${last || (level === 2 && next < 2) ? 16 : 34}`);
      lines.push(`M${x} 16h${14}`);
      if (level === 2) lines.push("M32 0v34");
      if (next > level) lines.push(`M${x + 23} 24v10`);
    }
    return html`<li class="${icon === "tPart" ? "part" : ""} ${label === "PartBody" ? "active" : ""}">
      <svg width=${23 + 23 * level} height="32" aria-hidden="true">
        <path d=${lines.join("")} stroke="#fff" stroke-width="3" fill="none" />
        ${knob ? svg`<circle cx=${x} cy="16" r="7" fill="url(#knob)" />${p(knob === "+" ? `M${x - 4} 16h8M${x} 12v8` : `M${x - 4} 16h9`, "none", "#000", 3)}` : nothing}
      </svg>${this.icon(icon, 27)}<span class="label"><span>${label}</span></span></li>`;
  }

  private globe(size: number) {
    return html`<svg class="logo" width=${size} height=${size} viewBox="0 0 20 20" aria-hidden="true">
      <rect width="20" height="20" fill="#0a0a14" />
      <circle cx="13" cy="8" r="7" fill="url(#flare)" />
      ${p("M0 2C7 5 11 12 11 20H5C5 12 3 8 0 6z", "#1e78be", "none")}${p("M1 2c7 4 10 10 10 18", "none", "#8cd2f5", 1)}
    </svg>`;
  }

  private model() {
    const e = (d: string) => p(d, "none", "#0a0a0a", 1.4);
    return html`<svg class="model" viewBox="28 182 1836 745" role="img" aria-label="Pipe part">
      <defs>
        <linearGradient id="h" x1="0" y1="0" x2="0" y2="1"><stop offset="0" stop-color="#7e7e7e"/><stop offset=".2" stop-color="#909090"/><stop offset=".32" stop-color="#8e8e8e"/><stop offset=".52" stop-color="#6c6c6c"/><stop offset=".82" stop-color="#333"/><stop offset="1" stop-color="#303030"/></linearGradient>
        <linearGradient id="v"><stop offset="0" stop-color="#5c5c5c"/><stop offset=".35" stop-color="#707070"/><stop offset=".5" stop-color="#767676"/><stop offset=".65" stop-color="#707070"/><stop offset="1" stop-color="#5a5a5a"/></linearGradient>
        <radialGradient id="rv" gradientUnits="userSpaceOnUse" cx="965" cy="501" r="241"><stop offset=".355" stop-color="#626262"/><stop offset=".6" stop-color="#767676"/><stop offset=".75" stop-color="#707070"/><stop offset="1" stop-color="#525252"/></radialGradient>
        <radialGradient id="rh" gradientUnits="userSpaceOnUse" cx="965" cy="501" r="241"><stop offset=".355" stop-color="#7e7e7e"/><stop offset=".48" stop-color="#909090"/><stop offset=".56" stop-color="#8e8e8e"/><stop offset=".69" stop-color="#6c6c6c"/><stop offset=".88" stop-color="#333"/><stop offset="1" stop-color="#303030"/></radialGradient>
        <linearGradient id="mg" gradientUnits="userSpaceOnUse" x1="990" y1="690" x2="1165" y2="500"><stop offset="0" stop-color="#fff"/><stop offset="1" stop-color="#000"/></linearGradient>
        <mask id="mk"><rect x="960" y="495" width="250" height="250" fill="url(#mg)"/></mask>
        <radialGradient id="hl"><stop offset="0" stop-color="#f0f0f0"/><stop offset=".4" stop-color="#ccc" stop-opacity=".7"/><stop offset="1" stop-color="#888" stop-opacity="0"/></radialGradient>
        <linearGradient id="sl"><stop offset="0" stop-color="#666"/><stop offset=".3" stop-color="#ccc"/><stop offset=".5" stop-color="#777"/><stop offset=".7" stop-color="#ccc"/><stop offset="1" stop-color="#666"/></linearGradient>
        <linearGradient id="sv" x1="0" y1="0" x2="0" y2="1"><stop offset="0" stop-color="#777"/><stop offset=".28" stop-color="#ddd"/><stop offset=".45" stop-color="#777"/><stop offset="1" stop-color="#303030"/></linearGradient>
      </defs>
      ${p("M616 582q3 4 9 4v156q-6 1-9 5z", "url(#h)", "none")}
      <ellipse cx="621" cy="636" rx="3" ry="34" fill="url(#hl)" />
      ${p("M584 556q0-2 3-2h21q8 2 8 9v202q0 7-8 9h-21q-3 0-3-2z", "#737373", "#0a0a0a", 1.4)}
      ${p("M585 555h23l7 9v7h-30z", "#888", "none")}${p("M585 757h30v8l-7 8h-23z", "#444", "none")}
      <ellipse cx="609" cy="566" rx="3" ry="6" fill="url(#hl)" />
      ${e("M607 554v220M584 571h32M584 757h32")}
      ${p("M625 586h340v156H625z", "url(#h)", "none")}
      ${e("M616 582q3 4 9 4H965M616 747q3-5 9-5H965M625 586v156")}
      ${p("M965 586A85 85 0 0 0 1051 501H1205A241 241 0 0 1 965 742z", "url(#rv)", "none")}
      <g mask="url(#mk)">${p("M965 586A85 85 0 0 0 1051 501H1205A241 241 0 0 1 965 742z", "url(#rh)", "none")}</g>
      <ellipse cx="1050" cy="588" rx="68" ry="18" transform="rotate(-50 1050 588)" fill="url(#hl)" />
      ${e("M965 586A85 85 0 0 0 1051 501V353M965 742A241 241 0 0 0 1205 501M965 586v156")}
      ${p("M1051 353h154v148h-154z", "url(#v)", "none")}
      ${p("M1046 345h164l-5 8h-154z", "#505050", "#0a0a0a")}
      ${p("M1019 313h218v24q0 8-8 8h-202q-8 0-8-8z", "#707070", "#0a0a0a", 1.4)}
      ${p("M1020 337h216q0 7-7 7h-202q-7 0-7-7z", "#484848", "none")}
      ${e("M1034 313v32M1222 313v32M1019 336h218M1051 353h154M1051 501h154M1051 353v148M1205 353v8M1205 500v1")}
      ${p("M1205 361q3 6 10 7h146v124h-146q-7 3-11 8c-16-26-31-48-31-70s17-44 32-69z", "url(#h)", "none")}
      ${p("M1205 361q3 6 10 7c-20 22-36 42-36 62s16 42 36 62q-7 3-11 8c-16-26-31-48-31-70s17-44 32-69z", "url(#sv)", "#0a0a0a", 1.4)}
      ${e("M1172 430h189M1359 368v124M1361 370v120")}
      ${p("M693 471h124v106c-20 12-40 38-61 38s-43-26-63-38z", "url(#v)", "none")}
      ${p("M693 577q-2 7-7 9c22 14 44 34 70 34s48-20 70-34q-7-2-8-9c-20 14-42 38-62 38s-43-24-63-38z", "url(#sl)", "#0a0a0a", 1.4)}
      ${p("M690 463h129l-3 8H693z", "#555", "none")}
      ${p("M663 437h186v18q-1 7-8 7H671q-7-1-8-8z", "#656565", "none")}
      ${p("M722 437h67v25h-67z", "url(#v)", "none")}${p("M663 453h186q-1 8-8 9H671q-7-1-8-9z", "#00000044", "none")}
      ${e("M662 437h187M663 453h186M670 462h172M678 437v17l4 8M722 437v17l5 8M789 437v17l-5 8M834 437v17l-4 8M693 471h124M756 462v158")}
    </svg>`;
  }

  render() {
    return html`
      <svg class="defs" aria-hidden="true"><defs>
        <pattern id="dots" width="4" height="4" patternUnits="userSpaceOnUse"><path d="M0 0h2v1H0zM2 2h2v1H2zM0 3h1v1H0zM3 1h1v1H3zM1 2h1v1H1z" fill="#b4b4be" /></pattern>
        <pattern id="fine" width="4" height="4" patternUnits="userSpaceOnUse"><path d="M0 0h1v1H0zM2 0h1v1H2zM1 2h1v1H1zM3 2h1v1H3zM0 3h1v1H0z" fill="#333366" /></pattern>
        <radialGradient id="knob" cx=".4" cy=".3"><stop offset="0" stop-color="#e0e0e0" /><stop offset="1" stop-color="#6e6e6e" /></radialGradient>
        <radialGradient id="flare"><stop offset="0" stop-color="#fff0c8" /><stop offset=".4" stop-color="#f0963c" /><stop offset="1" stop-color="#3c1e14" /></radialGradient>
      </defs></svg>

      <header class="title">
        <div class="busy"></div>${this.globe(20)}
        <h1>CATIA V5 - [Wooden_L-bend-pattern.CATPart]</h1>
        <button class="win" aria-label="Minimize"><svg width="16" height="16">${p("M0 8.500h15")}</svg></button>
        <button class="win" aria-label="Restore"><svg width="16" height="16">${p("M.5 4.500h10v11H.5zM4.500 4.500v-4h11v11h-4")}</svg></button>
        <button class="win" aria-label="Close"><svg width="16" height="16">${p("M.5.5l15 15M15.500.5l-15 15")}</svg></button>
      </header>

      <nav class="menu" aria-label="Main menu">
        ${this.globe(28)}
        <button class="start"><i>S</i>tart</button><button class="pdm">ENOVIA V5 VPM</button>
        ${MENUS.map((m) => html`<button><i>${m[0]}</i>${m.slice(1)}</button>`)}
        <div class="mdi">
          <button aria-label="Minimize document"><svg width="14" height="14">${p("M2 11h8", "none", "#6e8296", 3)}</svg></button>
          <button aria-label="Restore document"><svg width="14" height="14">${p("M2 6h7v6H2zM5 5V2h7v6h-2M2 7h7M5 3h7", "none", "#6e8296", 1.5)}</svg></button>
          <button aria-label="Close document"><svg width="14" height="14">${p("M3 2l8 10M11 2L3 12", "none", "#5f7388", 3)}</svg></button>
        </div>
      </nav>

      <section class="bars" aria-label="Toolbars">
        <div class="bar">${this.groups(ROW1)}</div>
        <div class="bar second">${this.groups(ROW2)}</div>
      </section>

      <main class="main">
        <div class="scroll">
          <button aria-label="Scroll up"><svg width="14" height="14">${p("M7 1l6 12H1z", "#000")}</svg></button>
          <div class="thumb"></div>
          <button class="down" aria-label="Scroll down"><svg width="14" height="14">${p("M7 13l6-12H1z", "#000")}</svg></button>
        </div>
        <div class="view">
          ${this.model()}
          <svg class="compass" width="243" height="200" viewBox="1621 182 243 200" role="img" aria-label="Compass">
            ${p("M1690 219a75 75 0 0 1 74 75h-74z", "#1e3c5f", "none")}
            ${p("M1690 200v158M1690 219a75 75 0 0 1 74 75h-74M1650 358h95", "none", "#dcc8ff", 3)}
            ${c(1690, 199, 5, "#dcc8ff", "none")}${p("M1683 351h13v13h-13z", "#d20000", "none")}
            <text x="1702" y="200" font-size="19" fill="#f0e614">z</text><text x="1707" y="296" font-size="19" fill="#f0e614">x</text><text x="1777" y="296" font-size="19" fill="#f0e614">y</text>
          </svg>
          <svg class="triad" width="63" height="100" viewBox="1801 827 63 100" role="img" aria-label="Axes">
            ${p("M1807 844v36h38", "none", "#fff", 2)}
            <text x="1807" y="844" font-size="18" fill="#fff">z</text><text x="1844" y="883" font-size="19" fill="#fff">y</text>
          </svg>
          <ul class="tree">${TREE.map((r, i) => this.treeRow(r, i))}</ul>
        </div>
        <aside class="side">${this.side()}</aside>
      </main>

      <footer class="foot">
        ${this.groups(BOTTOM)}
        <div class="std">${this.groups(STANDARD)}</div>
        <svg class="brand" width="64" height="54" viewBox="0 0 64 54" role="img" aria-label="CATIA">
          ${p("M13 5c9-2 15-1 12 4-2 3-5 4-8 5", "none", "#e62832", 3)}
          <text x="0" y="36" font-size="25" font-style="italic" font-weight="700" fill="#503c96">D<tspan dx="-1" dy="-3" fill="#fa9614">S</tspan></text>
          <text x="10" y="50" font-size="15" font-style="italic" font-weight="700" fill="#503c96">CATIA</text>
        </svg>
      </footer>

      <div class="status">
        <p>Select an object or a command</p>
        <input class="cmd" type="text" aria-label="Power input" />
        <button aria-label="Dialog"><svg width="24" height="20">${p("M3 3h9v8H3zM15 12h3v3h-3zM22 1v18H2", "none", "#96969e", 2)}</svg></button>
        <button aria-label="Information"><svg width="24" height="22">${p("M1 1h22v20H1z", "#c4c4cc", "#222", 1)}${c(12, 10, 9, "#fff", "#222", 1)}${p("M22 1v20H1M14 18l5 3", "none", "#111", 2)}<text x="9" y="17" font-size="18" font-weight="700" fill="#1482fa">i</text></svg></button>
      </div>`;
  }
}
